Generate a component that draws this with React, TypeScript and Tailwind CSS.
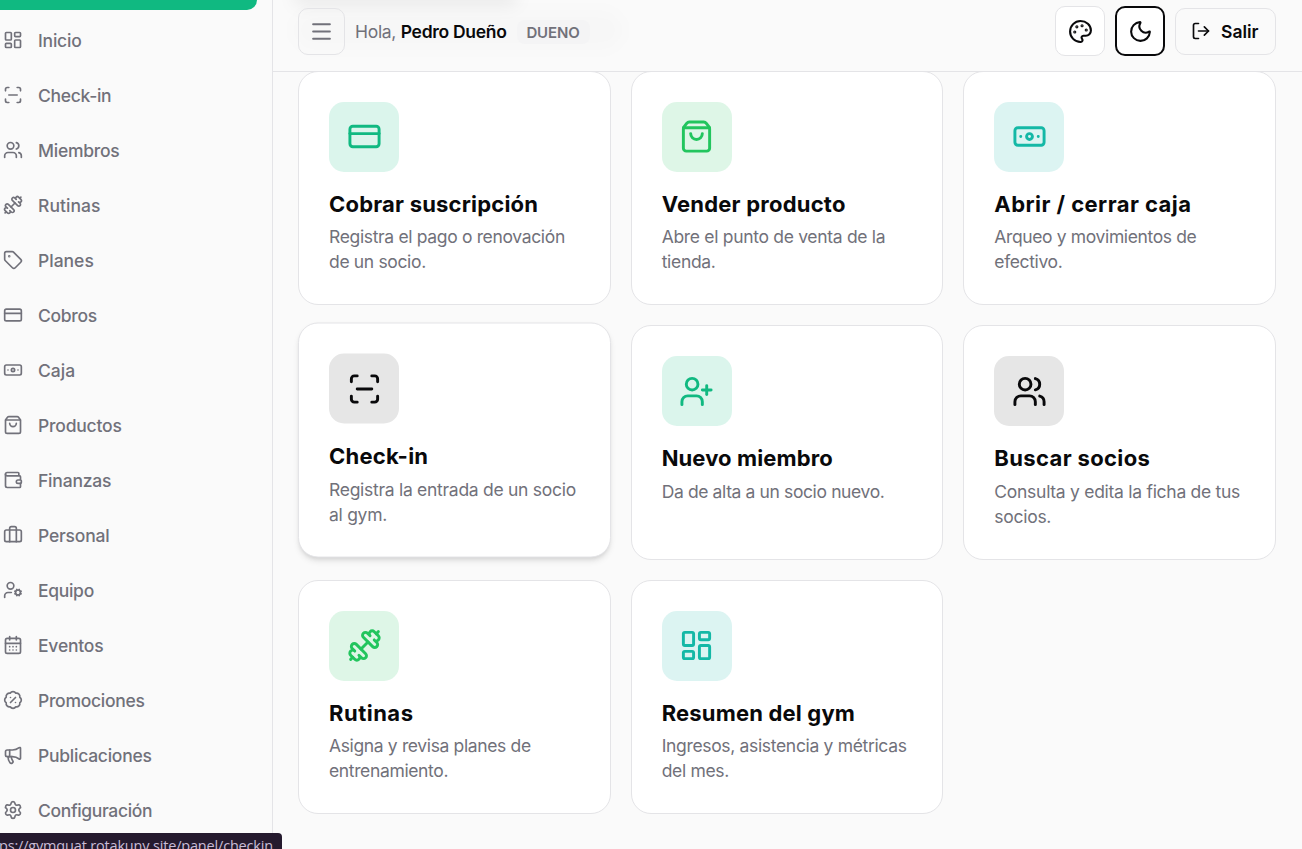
import {
  BadgePercent,
  Banknote,
  Briefcase,
  CalendarDays,
  CreditCard,
  Dumbbell,
  LayoutDashboard,
  LogOut,
  Megaphone,
  Menu,
  Moon,
  Palette,
  ScanLine,
  Settings,
  ShoppingBag,
  Tag,
  UserCog,
  UserPlus,
  Users,
  Wallet,
  type LucideIcon,
} from 'lucide-react';
import { clsx } from 'clsx';

const navItems: { label: string; icon: LucideIcon; tracking: string }[] = [
  { label: 'Inicio', icon: LayoutDashboard, tracking: 'tracking-[-0.2px]' },
  { label: 'Check-in', icon: ScanLine, tracking: 'tracking-[-0.3px]' },
  { label: 'Miembros', icon: Users, tracking: 'tracking-[-0.25px]' },
  { label: 'Rutinas', icon: Dumbbell, tracking: 'tracking-[0.05px]' },
  { label: 'Planes', icon: Tag, tracking: 'tracking-[0px]' },
  { label: 'Cobros', icon: CreditCard, tracking: 'tracking-[-0.3px]' },
  { label: 'Caja', icon: Banknote, tracking: 'tracking-[0px]' },
  { label: 'Productos', icon: ShoppingBag, tracking: 'tracking-[-0.2px]' },
  { label: 'Finanzas', icon: Wallet, tracking: 'tracking-[-0.2px]' },
  { label: 'Personal', icon: Briefcase, tracking: 'tracking-[-0.2px]' },
  { label: 'Equipo', icon: UserCog, tracking: 'tracking-[-0.3px]' },
  { label: 'Eventos', icon: CalendarDays, tracking: 'tracking-[-0.2px]' },
  { label: 'Promociones', icon: BadgePercent, tracking: 'tracking-[-0.28px]' },
  { label: 'Publicaciones', icon: Megaphone, tracking: 'tracking-[-0.25px]' },
  { label: 'Configuración', icon: Settings, tracking: 'tracking-[-0.35px]' },
];

const tones = {
  emerald: 'bg-[#10b981]/15 text-[#10b981]',
  green: 'bg-[#22c55e]/15 text-[#22c55e]',
  teal: 'bg-[#14b8a6]/15 text-[#14b8a6]',
  dark: 'bg-[#09090b]/10 text-[#09090b]',
};

type Action = {
  title: string;
  titleTracking: string;
  text: string[];
  textTracking: string;
  icon: LucideIcon;
  tone: keyof typeof tones;
  active?: boolean;
};

const actions: Action[] = [
  {
    title: 'Cobrar suscripción',
    titleTracking: 'tracking-[0.2px]',
    text: ['Registra el pago o renovación', 'de un socio.'],
    textTracking: 'tracking-[-0.34px]',
    icon: CreditCard,
    tone: 'emerald',
  },
  {
    title: 'Vender producto',
    titleTracking: 'tracking-[0.22px]',
    text: ['Abre el punto de venta de la', 'tienda.'],
    textTracking: 'tracking-[-0.31px]',
    icon: ShoppingBag,
    tone: 'green',
  },
  {
    title: 'Abrir / cerrar caja',
    titleTracking: 'tracking-[0.44px]',
    text: ['Arqueo y movimientos de', 'efectivo.'],
    textTracking: 'tracking-[-0.37px]',
    icon: Banknote,
    tone: 'teal',
  },
  {
    title: 'Check-in',
    titleTracking: 'tracking-[0.22px]',
    text: ['Registra la entrada de un socio', 'al gym.'],
    textTracking: 'tracking-[-0.28px]',
    icon: ScanLine,
    tone: 'dark',
    active: true,
  },
  {
    title: 'Nuevo miembro',
    titleTracking: 'tracking-[0.12px]',
    text: ['Da de alta a un socio nuevo.'],
    textTracking: 'tracking-[-0.38px]',
    icon: UserPlus,
    tone: 'emerald',
  },
  {
    title: 'Buscar socios',
    titleTracking: 'tracking-[0.36px]',
    text: ['Consulta y edita la ficha de tus', 'socios.'],
    textTracking: 'tracking-[-0.28px]',
    icon: Users,
    tone: 'dark',
  },
  {
    title: 'Rutinas',
    titleTracking: 'tracking-[0.5px]',
    text: ['Asigna y revisa planes de', 'entrenamiento.'],
    textTracking: 'tracking-[-0.36px]',
    icon: Dumbbell,
    tone: 'green',
  },
  {
    title: 'Resumen del gym',
    titleTracking: 'tracking-[0.18px]',
    text: ['Ingresos, asistencia y métricas', 'del mes.'],
    textTracking: 'tracking-[-0.33px]',
    icon: LayoutDashboard,
    tone: 'teal',
  },
];

function Sidebar() {
  return (
    <aside className="w-[273px] shrink-0 border-r border-[#e4e4e7]">
      <div className="h-[10px] w-[257px] rounded-br-[10px] bg-[#10b981]" />
      <nav className="mt-[5px] flex flex-col gap-[5px]">
        {navItems.map(({ label, icon: Icon, tracking }) => (
          <a key={label} className="flex h-[50px] items-center gap-[15px] pl-[3px] text-[17.5px] font-medium text-[#71717a]">
            <Icon size={20} className="shrink-0" />
            <span className={clsx('mt-[3px]', tracking)}>{label}</span>
          </a>
        ))}
      </nav>
    </aside>
  );
}

function Header() {
  return (
    <header className="relative z-10 flex h-[72px] shrink-0 items-start justify-between overflow-hidden border-b border-[#e4e4e7] bg-[#fafafa] pr-[26px] pl-[25px] pt-[6px]">
      {/* page title showing through the translucent bar */}
      <div className="absolute -top-[14px] left-[20px] h-[20px] w-[225px] rounded-full bg-black/[0.06] blur-[8px]" />
      <div className="absolute top-[10px] left-[20px] h-[40px] w-[330px] rounded-full bg-black/[0.01] blur-[8px]" />
      <div className="relative flex h-[50px] items-center">
        <button className="flex size-[47px] items-center justify-center rounded-[10px] border border-[#e4e4e7] text-[#71717a]">
          <Menu size={25} />
        </button>
        <span className="mt-[2px] ml-[10px] text-[17.5px] tracking-[-0.3px] text-[#71717a]">
          Hola, <span className="font-semibold text-[#09090b]">Pedro Dueño</span>
        </span>
        <span className="mt-[2px] ml-[10px] flex h-[24px] w-[73px] items-center justify-center rounded-[8px] bg-[#f4f4f5] pt-[2px] text-[15px] font-semibold tracking-[-0.1px] text-[#71717a]">
          DUENO
        </span>
      </div>
      <div className="relative flex h-[50px] items-center gap-[10px] text-[#09090b]">
        <button className="flex size-[50px] items-center justify-center rounded-[10px] border border-[#e4e4e7] bg-white">
          <Palette size={25} />
        </button>
        <button className="flex size-[50px] items-center justify-center rounded-[10px] border-2 border-[#09090b] bg-white">
          <Moon size={25} />
        </button>
        <button className="flex h-[47px] w-[101px] items-center gap-[10px] rounded-[10px] border border-[#e4e4e7] pl-[15px] text-[17.5px] font-semibold">
          <LogOut size={20} />
          <span className="mt-[2px]">Salir</span>
        </button>
      </div>
    </header>
  );
}

function ActionCard({ title, titleTracking, text, textTracking, icon: Icon, tone, active }: Action) {
  return (
    <article
      className={clsx(
        'h-[234.5px] rounded-[20px] border border-[#e4e4e7] bg-white p-[30px]',
        active && '-translate-y-[2.5px] shadow-md',
      )}
    >
      <div className={clsx('flex size-[70px] items-center justify-center rounded-[15px]', tones[tone])}>
        <Icon size={35} />
      </div>
      <h2 className={clsx('mt-[18px] text-[22px] leading-[28px] font-bold whitespace-nowrap text-[#09090b]', titleTracking)}>
        {title}
      </h2>
      <p className={clsx('mt-[6.5px] text-[17.5px] leading-[25px] whitespace-nowrap text-[#71717a]', textTracking)}>
        {text.map(line => (
          <span key={line} className="block">{line}</span>
        ))}
      </p>
    </article>
  );
}

export default function App() {
  return (
    <div className="relative flex h-[849px] w-[1302px] overflow-hidden bg-[#fafafa] font-[Inter,sans-serif]">
      <Sidebar />
      <div className="flex min-w-0 flex-1 flex-col">
        <Header />
        <main className="-mt-[1.2px] grid grid-cols-3 gap-[20px] pr-[26px] pl-[25px]">
          {actions.map(action => (
            <ActionCard key={action.title} {...action} />
          ))}
        </main>
      </div>

      {/* link preview */}
      <div className="absolute top-[833px] left-0 z-20 h-[20px] w-[282px] rounded-tr-[4px] bg-[#251a2e] font-['Open_Sans',sans-serif] text-[14.5px] leading-[26px] tracking-[-0.18px] whitespace-nowrap text-[#c8bcd6]">
        <span className="block -ml-px">ps://gymquat.rotakuny.site/panel/checkin</span>
      </div>
    </div>
  );
}
